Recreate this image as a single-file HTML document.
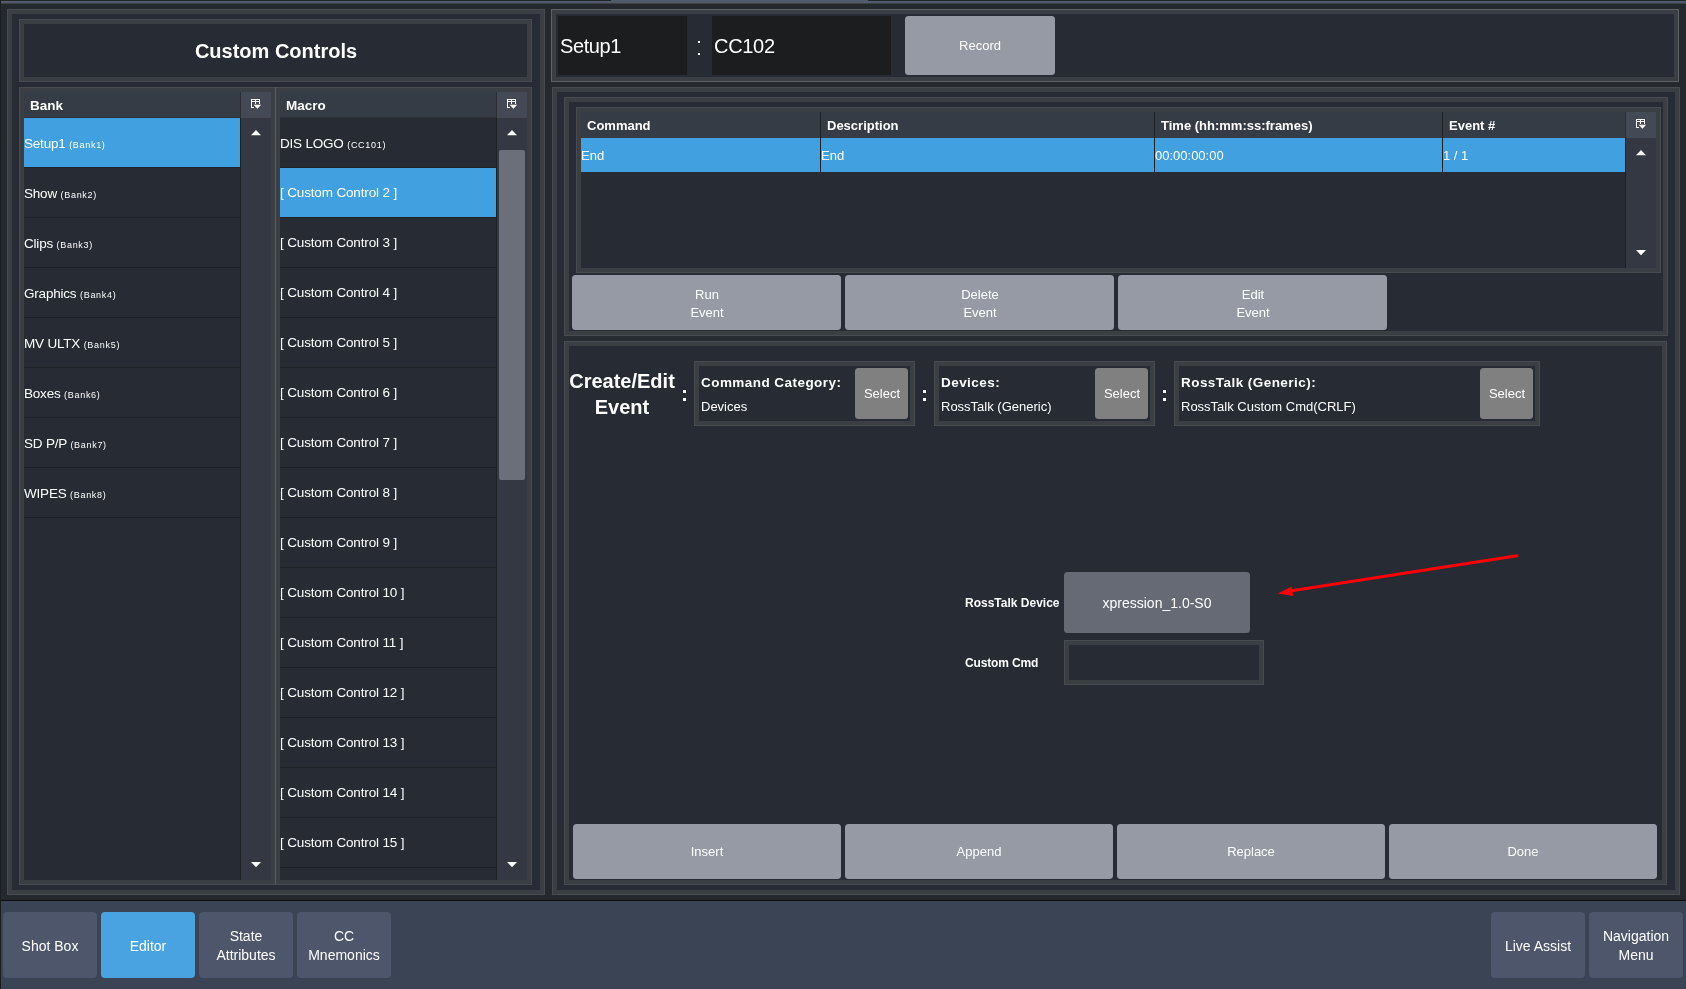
<!DOCTYPE html>
<html><head><meta charset="utf-8"><style>
html,body{margin:0;padding:0;}
body{width:1686px;height:989px;overflow:hidden;position:relative;background:#25282d;font-family:"Liberation Sans",sans-serif;}
body>div,body>svg{position:absolute;box-sizing:border-box;}
.t{white-space:nowrap;will-change:transform;}
</style></head><body>
<div style="left:0px;top:0px;width:1686px;height:1px;background:#23272b;"></div>
<div style="left:611px;top:0px;width:257px;height:1px;background:#4f5a6b;"></div>
<div style="left:0px;top:1px;width:1686px;height:2px;background:#515b6c;"></div>
<div style="left:0px;top:3px;width:1686px;height:1px;background:#3f4042;"></div>
<div style="left:0px;top:0px;width:1px;height:989px;background:#1b1e20;"></div>
<div style="left:7px;top:9px;width:538px;height:886px;background:#272b33;border:1px solid #484b50;box-shadow:inset 0 0 0 4px #3b3e43"></div>
<div style="left:19px;top:19px;width:513px;height:63px;background:#272b33;border:1px solid #484b50;box-shadow:inset 0 0 0 4px #3b3e43"></div>
<div class="t" style="left:-24.5px;width:600px;text-align:center;top:41.00px;font-size:20px;line-height:20px;font-weight:bold;color:#ffffff;">Custom Controls</div>
<div style="left:19px;top:87px;width:513px;height:798px;background:#272b33;border:1px solid #484b50;box-shadow:inset 0 0 0 4px #3b3e43"></div>
<div style="left:271px;top:88px;width:9px;height:796px;background:#3b3e43;"></div>
<div style="left:275px;top:87px;width:1px;height:797px;background:#595c60;"></div>
<div style="left:24px;top:92px;width:217px;height:26px;background:#363c46;"></div>
<div class="t" style="left:30px;top:99.00px;font-size:13.5px;line-height:13.5px;font-weight:bold;color:#ffffff;">Bank</div>
<div style="left:241px;top:92px;width:30px;height:26px;background:#434955;"></div>
<svg style="left:250px;top:98px" width="13" height="13"><rect x="1" y="1" width="9" height="1" fill="#fff"/><rect x="1" y="3" width="9" height="1" fill="#fff"/><rect x="1" y="1" width="1" height="9" fill="#fff"/><rect x="5" y="1" width="1" height="5" fill="#fff"/><rect x="9" y="1" width="1" height="5" fill="#fff"/><rect x="1" y="9" width="3" height="1" fill="#fff"/><polygon points="3.6,6.8 11.2,6.8 7.4,10.8" fill="#fff"/></svg>
<div style="left:241px;top:118px;width:30px;height:762px;background:#343843;"></div>
<div style="left:240px;top:118px;width:1px;height:762px;background:#1d2024;"></div>
<div style="left:240px;top:92px;width:1px;height:26px;background:#2b2e35;"></div>
<div style="left:24px;top:117px;width:216px;height:1px;background:#2c3038;"></div>
<svg style="left:251px;top:130px" width="10" height="6.2"><polygon points="0,5.2 10,5.2 5.0,0" fill="#ffffff"/></svg>
<svg style="left:251px;top:861.5px" width="10" height="6.2"><polygon points="0,0 10,0 5.0,5.2" fill="#ffffff"/></svg>
<div style="left:24px;top:118px;width:216px;height:49px;background:#41a0df;"></div>
<div style="left:24px;top:167px;width:217px;height:1px;background:#1d2024;"></div>
<div class="t" style="left:24px;top:137.00px;font-size:13.5px;line-height:13.5px;color:#ffffff;letter-spacing:-0.2px">Setup1 <span style="font-size:9px;letter-spacing:0.7px">(Bank1)</span></div>
<div style="left:24px;top:168px;width:216px;height:49px;background:#272b33;"></div>
<div style="left:24px;top:217px;width:217px;height:1px;background:#1d2024;"></div>
<div class="t" style="left:24px;top:187.00px;font-size:13.5px;line-height:13.5px;color:#ffffff;letter-spacing:-0.2px">Show <span style="font-size:9px;letter-spacing:0.7px">(Bank2)</span></div>
<div style="left:24px;top:218px;width:216px;height:49px;background:#272b33;"></div>
<div style="left:24px;top:267px;width:217px;height:1px;background:#1d2024;"></div>
<div class="t" style="left:24px;top:237.00px;font-size:13.5px;line-height:13.5px;color:#ffffff;letter-spacing:-0.2px">Clips <span style="font-size:9px;letter-spacing:0.7px">(Bank3)</span></div>
<div style="left:24px;top:268px;width:216px;height:49px;background:#272b33;"></div>
<div style="left:24px;top:317px;width:217px;height:1px;background:#1d2024;"></div>
<div class="t" style="left:24px;top:287.00px;font-size:13.5px;line-height:13.5px;color:#ffffff;letter-spacing:-0.2px">Graphics <span style="font-size:9px;letter-spacing:0.7px">(Bank4)</span></div>
<div style="left:24px;top:318px;width:216px;height:49px;background:#272b33;"></div>
<div style="left:24px;top:367px;width:217px;height:1px;background:#1d2024;"></div>
<div class="t" style="left:24px;top:337.00px;font-size:13.5px;line-height:13.5px;color:#ffffff;letter-spacing:-0.2px">MV ULTX <span style="font-size:9px;letter-spacing:0.7px">(Bank5)</span></div>
<div style="left:24px;top:368px;width:216px;height:49px;background:#272b33;"></div>
<div style="left:24px;top:417px;width:217px;height:1px;background:#1d2024;"></div>
<div class="t" style="left:24px;top:387.00px;font-size:13.5px;line-height:13.5px;color:#ffffff;letter-spacing:-0.2px">Boxes <span style="font-size:9px;letter-spacing:0.7px">(Bank6)</span></div>
<div style="left:24px;top:418px;width:216px;height:49px;background:#272b33;"></div>
<div style="left:24px;top:467px;width:217px;height:1px;background:#1d2024;"></div>
<div class="t" style="left:24px;top:437.00px;font-size:13.5px;line-height:13.5px;color:#ffffff;letter-spacing:-0.2px">SD P/P <span style="font-size:9px;letter-spacing:0.7px">(Bank7)</span></div>
<div style="left:24px;top:468px;width:216px;height:49px;background:#272b33;"></div>
<div style="left:24px;top:517px;width:217px;height:1px;background:#1d2024;"></div>
<div class="t" style="left:24px;top:487.00px;font-size:13.5px;line-height:13.5px;color:#ffffff;letter-spacing:-0.2px">WIPES <span style="font-size:9px;letter-spacing:0.7px">(Bank8)</span></div>
<div style="left:280px;top:92px;width:217px;height:26px;background:#363c46;"></div>
<div class="t" style="left:286px;top:99.00px;font-size:13.5px;line-height:13.5px;font-weight:bold;color:#ffffff;">Macro</div>
<div style="left:497px;top:92px;width:30px;height:26px;background:#434955;"></div>
<svg style="left:506px;top:98px" width="13" height="13"><rect x="1" y="1" width="9" height="1" fill="#fff"/><rect x="1" y="3" width="9" height="1" fill="#fff"/><rect x="1" y="1" width="1" height="9" fill="#fff"/><rect x="5" y="1" width="1" height="5" fill="#fff"/><rect x="9" y="1" width="1" height="5" fill="#fff"/><rect x="1" y="9" width="3" height="1" fill="#fff"/><polygon points="3.6,6.8 11.2,6.8 7.4,10.8" fill="#fff"/></svg>
<div style="left:497px;top:118px;width:30px;height:762px;background:#343843;"></div>
<div style="left:496px;top:118px;width:1px;height:762px;background:#1d2024;"></div>
<div style="left:496px;top:92px;width:1px;height:26px;background:#2b2e35;"></div>
<div style="left:280px;top:117px;width:216px;height:1px;background:#2c3038;"></div>
<div style="left:499px;top:150px;width:26px;height:330px;background:#6b6f7a;border-radius:2px"></div>
<svg style="left:507px;top:130px" width="10" height="6.2"><polygon points="0,5.2 10,5.2 5.0,0" fill="#ffffff"/></svg>
<svg style="left:507px;top:861.5px" width="10" height="6.2"><polygon points="0,0 10,0 5.0,5.2" fill="#ffffff"/></svg>
<div style="left:280px;top:118px;width:216px;height:49px;background:#272b33;"></div>
<div style="left:280px;top:167px;width:217px;height:1px;background:#1d2024;"></div>
<div class="t" style="left:280px;top:137.00px;font-size:13.5px;line-height:13.5px;color:#ffffff;letter-spacing:-0.2px">DIS LOGO <span style="font-size:9px;letter-spacing:0.7px">(CC101)</span></div>
<div style="left:280px;top:168px;width:216px;height:49px;background:#41a0df;"></div>
<div style="left:280px;top:217px;width:217px;height:1px;background:#1d2024;"></div>
<div class="t" style="left:280px;top:186.00px;font-size:13.5px;line-height:13.5px;color:#ffffff;letter-spacing:-0.15px">[ Custom Control 2 ]</div>
<div style="left:280px;top:218px;width:216px;height:49px;background:#272b33;"></div>
<div style="left:280px;top:267px;width:217px;height:1px;background:#1d2024;"></div>
<div class="t" style="left:280px;top:236.00px;font-size:13.5px;line-height:13.5px;color:#ffffff;letter-spacing:-0.15px">[ Custom Control 3 ]</div>
<div style="left:280px;top:268px;width:216px;height:49px;background:#272b33;"></div>
<div style="left:280px;top:317px;width:217px;height:1px;background:#1d2024;"></div>
<div class="t" style="left:280px;top:286.00px;font-size:13.5px;line-height:13.5px;color:#ffffff;letter-spacing:-0.15px">[ Custom Control 4 ]</div>
<div style="left:280px;top:318px;width:216px;height:49px;background:#272b33;"></div>
<div style="left:280px;top:367px;width:217px;height:1px;background:#1d2024;"></div>
<div class="t" style="left:280px;top:336.00px;font-size:13.5px;line-height:13.5px;color:#ffffff;letter-spacing:-0.15px">[ Custom Control 5 ]</div>
<div style="left:280px;top:368px;width:216px;height:49px;background:#272b33;"></div>
<div style="left:280px;top:417px;width:217px;height:1px;background:#1d2024;"></div>
<div class="t" style="left:280px;top:386.00px;font-size:13.5px;line-height:13.5px;color:#ffffff;letter-spacing:-0.15px">[ Custom Control 6 ]</div>
<div style="left:280px;top:418px;width:216px;height:49px;background:#272b33;"></div>
<div style="left:280px;top:467px;width:217px;height:1px;background:#1d2024;"></div>
<div class="t" style="left:280px;top:436.00px;font-size:13.5px;line-height:13.5px;color:#ffffff;letter-spacing:-0.15px">[ Custom Control 7 ]</div>
<div style="left:280px;top:468px;width:216px;height:49px;background:#272b33;"></div>
<div style="left:280px;top:517px;width:217px;height:1px;background:#1d2024;"></div>
<div class="t" style="left:280px;top:486.00px;font-size:13.5px;line-height:13.5px;color:#ffffff;letter-spacing:-0.15px">[ Custom Control 8 ]</div>
<div style="left:280px;top:518px;width:216px;height:49px;background:#272b33;"></div>
<div style="left:280px;top:567px;width:217px;height:1px;background:#1d2024;"></div>
<div class="t" style="left:280px;top:536.00px;font-size:13.5px;line-height:13.5px;color:#ffffff;letter-spacing:-0.15px">[ Custom Control 9 ]</div>
<div style="left:280px;top:568px;width:216px;height:49px;background:#272b33;"></div>
<div style="left:280px;top:617px;width:217px;height:1px;background:#1d2024;"></div>
<div class="t" style="left:280px;top:586.00px;font-size:13.5px;line-height:13.5px;color:#ffffff;letter-spacing:-0.15px">[ Custom Control 10 ]</div>
<div style="left:280px;top:618px;width:216px;height:49px;background:#272b33;"></div>
<div style="left:280px;top:667px;width:217px;height:1px;background:#1d2024;"></div>
<div class="t" style="left:280px;top:636.00px;font-size:13.5px;line-height:13.5px;color:#ffffff;letter-spacing:-0.15px">[ Custom Control 11 ]</div>
<div style="left:280px;top:668px;width:216px;height:49px;background:#272b33;"></div>
<div style="left:280px;top:717px;width:217px;height:1px;background:#1d2024;"></div>
<div class="t" style="left:280px;top:686.00px;font-size:13.5px;line-height:13.5px;color:#ffffff;letter-spacing:-0.15px">[ Custom Control 12 ]</div>
<div style="left:280px;top:718px;width:216px;height:49px;background:#272b33;"></div>
<div style="left:280px;top:767px;width:217px;height:1px;background:#1d2024;"></div>
<div class="t" style="left:280px;top:736.00px;font-size:13.5px;line-height:13.5px;color:#ffffff;letter-spacing:-0.15px">[ Custom Control 13 ]</div>
<div style="left:280px;top:768px;width:216px;height:49px;background:#272b33;"></div>
<div style="left:280px;top:817px;width:217px;height:1px;background:#1d2024;"></div>
<div class="t" style="left:280px;top:786.00px;font-size:13.5px;line-height:13.5px;color:#ffffff;letter-spacing:-0.15px">[ Custom Control 14 ]</div>
<div style="left:280px;top:818px;width:216px;height:49px;background:#272b33;"></div>
<div style="left:280px;top:867px;width:217px;height:1px;background:#1d2024;"></div>
<div class="t" style="left:280px;top:836.00px;font-size:13.5px;line-height:13.5px;color:#ffffff;letter-spacing:-0.15px">[ Custom Control 15 ]</div>
<div style="left:280px;top:868px;width:216px;height:12px;background:#272b33;"></div>
<div style="left:551px;top:9px;width:1128px;height:73px;background:#272b33;border:1px solid #5f6366;box-shadow:inset 0 0 0 4px #3b3e43"></div>
<div style="left:558px;top:16px;width:129px;height:59px;background:#1c1d1f;"></div>
<div class="t" style="left:560px;top:36.00px;font-size:20px;line-height:20px;color:#ffffff;letter-spacing:-0.4px">Setup1</div>
<div style="left:698px;top:41px;width:2px;height:2px;background:#ffffff;"></div>
<div style="left:698px;top:53px;width:2px;height:2px;background:#ffffff;"></div>
<div style="left:712px;top:16px;width:179px;height:59px;background:#1c1d1f;"></div>
<div class="t" style="left:714px;top:36.00px;font-size:20px;line-height:20px;color:#ffffff;letter-spacing:-0.3px">CC102</div>
<div style="left:905px;top:16px;width:150px;height:59px;background:#959aa4;border-radius:3.5px"></div>
<div class="t" style="left:680.0px;width:600px;text-align:center;top:39.15px;font-size:13px;line-height:13px;color:#ffffff;">Record</div>
<div style="left:552px;top:87px;width:1128px;height:808px;background:#272b33;border:1px solid #484b50;box-shadow:inset 0 0 0 4px #3b3e43"></div>
<div style="left:564px;top:97px;width:1104px;height:239px;background:#272b33;border:1px solid #484b50;box-shadow:inset 0 0 0 4px #3b3e43"></div>
<div style="left:576px;top:107px;width:1085px;height:166px;background:#272b33;border:1px solid #484b50;box-shadow:inset 0 0 0 4px #3b3e43"></div>
<div style="left:581px;top:112px;width:1044px;height:26px;background:#363c46;"></div>
<div style="left:1626px;top:112px;width:30px;height:26px;background:#434955;"></div>
<div style="left:1625px;top:138px;width:1px;height:130px;background:#1d2024;"></div>
<div style="left:1625px;top:112px;width:1px;height:26px;background:#2b2e35;"></div>
<svg style="left:1635px;top:118px" width="13" height="13"><rect x="1" y="1" width="9" height="1" fill="#fff"/><rect x="1" y="3" width="9" height="1" fill="#fff"/><rect x="1" y="1" width="1" height="9" fill="#fff"/><rect x="5" y="1" width="1" height="5" fill="#fff"/><rect x="9" y="1" width="1" height="5" fill="#fff"/><rect x="1" y="9" width="3" height="1" fill="#fff"/><polygon points="3.6,6.8 11.2,6.8 7.4,10.8" fill="#fff"/></svg>
<div style="left:581px;top:138px;width:1044px;height:34px;background:#41a0df;"></div>
<div style="left:1626px;top:138px;width:30px;height:130px;background:#343843;"></div>
<svg style="left:1636px;top:150px" width="10" height="6.2"><polygon points="0,5.2 10,5.2 5.0,0" fill="#ffffff"/></svg>
<svg style="left:1636px;top:249.5px" width="10" height="6.2"><polygon points="0,0 10,0 5.0,5.2" fill="#ffffff"/></svg>
<div style="left:820px;top:112px;width:1px;height:60px;background:#1d2024;"></div>
<div style="left:1154px;top:112px;width:1px;height:60px;background:#1d2024;"></div>
<div style="left:1442px;top:112px;width:1px;height:60px;background:#1d2024;"></div>
<div class="t" style="left:587px;top:119.00px;font-size:13px;line-height:13px;font-weight:bold;color:#ffffff;">Command</div>
<div class="t" style="left:827px;top:119.00px;font-size:13px;line-height:13px;font-weight:bold;color:#ffffff;">Description</div>
<div class="t" style="left:1161px;top:119.00px;font-size:13px;line-height:13px;font-weight:bold;color:#ffffff;">Time (hh:mm:ss:frames)</div>
<div class="t" style="left:1449px;top:119.00px;font-size:13px;line-height:13px;font-weight:bold;color:#ffffff;">Event #</div>
<div class="t" style="left:581px;top:149.00px;font-size:13px;line-height:13px;color:#ffffff;">End</div>
<div class="t" style="left:821px;top:149.00px;font-size:13px;line-height:13px;color:#ffffff;">End</div>
<div class="t" style="left:1155px;top:149.00px;font-size:13px;line-height:13px;color:#ffffff;">00:00:00:00</div>
<div class="t" style="left:1443px;top:149.00px;font-size:13px;line-height:13px;color:#ffffff;">1 / 1</div>
<div style="left:572px;top:275px;width:269px;height:55px;background:#959aa4;border-radius:3.5px"></div>
<div class="t" style="left:406.5px;width:600px;text-align:center;top:288.00px;font-size:13px;line-height:13px;color:#ffffff;">Run</div>
<div class="t" style="left:406.5px;width:600px;text-align:center;top:306.00px;font-size:13px;line-height:13px;color:#ffffff;">Event</div>
<div style="left:845px;top:275px;width:269px;height:55px;background:#959aa4;border-radius:3.5px"></div>
<div class="t" style="left:679.5px;width:600px;text-align:center;top:288.00px;font-size:13px;line-height:13px;color:#ffffff;">Delete</div>
<div class="t" style="left:679.5px;width:600px;text-align:center;top:306.00px;font-size:13px;line-height:13px;color:#ffffff;">Event</div>
<div style="left:1118px;top:275px;width:269px;height:55px;background:#959aa4;border-radius:3.5px"></div>
<div class="t" style="left:952.5px;width:600px;text-align:center;top:288.00px;font-size:13px;line-height:13px;color:#ffffff;">Edit</div>
<div class="t" style="left:952.5px;width:600px;text-align:center;top:306.00px;font-size:13px;line-height:13px;color:#ffffff;">Event</div>
<div style="left:564px;top:341px;width:1103px;height:544px;background:#272b33;border:1px solid #484b50;box-shadow:inset 0 0 0 4px #3b3e43"></div>
<div class="t" style="left:322px;width:600px;text-align:center;top:371.00px;font-size:20px;line-height:20px;font-weight:bold;color:#ffffff;">Create/Edit</div>
<div class="t" style="left:322px;width:600px;text-align:center;top:396.50px;font-size:20px;line-height:20px;font-weight:bold;color:#ffffff;">Event</div>
<div style="left:683px;top:390px;width:3px;height:3px;background:#ffffff;"></div>
<div style="left:683px;top:398px;width:3px;height:3px;background:#ffffff;"></div>
<div style="left:694px;top:361px;width:221px;height:65px;background:#272b33;border:1px solid #484b50;box-shadow:inset 0 0 0 4px #3b3e43"></div>
<div class="t" style="left:701px;top:376.00px;font-size:13.5px;line-height:13.5px;font-weight:bold;color:#ffffff;letter-spacing:0.45px">Command Category:</div>
<div class="t" style="left:701px;top:400.00px;font-size:13px;line-height:13px;color:#ffffff;">Devices</div>
<div style="left:855px;top:368px;width:53px;height:51px;background:#808080;border-radius:3.5px"></div>
<div class="t" style="left:581.5px;width:600px;text-align:center;top:387.15px;font-size:13px;line-height:13px;color:#ffffff;">Select</div>
<div style="left:923px;top:390px;width:3px;height:3px;background:#ffffff;"></div>
<div style="left:923px;top:398px;width:3px;height:3px;background:#ffffff;"></div>
<div style="left:934px;top:361px;width:221px;height:65px;background:#272b33;border:1px solid #484b50;box-shadow:inset 0 0 0 4px #3b3e43"></div>
<div class="t" style="left:941px;top:376.00px;font-size:13.5px;line-height:13.5px;font-weight:bold;color:#ffffff;letter-spacing:0.45px">Devices:</div>
<div class="t" style="left:941px;top:400.00px;font-size:13px;line-height:13px;color:#ffffff;">RossTalk (Generic)</div>
<div style="left:1095px;top:368px;width:53px;height:51px;background:#808080;border-radius:3.5px"></div>
<div class="t" style="left:821.5px;width:600px;text-align:center;top:387.15px;font-size:13px;line-height:13px;color:#ffffff;">Select</div>
<div style="left:1163px;top:390px;width:3px;height:3px;background:#ffffff;"></div>
<div style="left:1163px;top:398px;width:3px;height:3px;background:#ffffff;"></div>
<div style="left:1174px;top:361px;width:366px;height:65px;background:#272b33;border:1px solid #484b50;box-shadow:inset 0 0 0 4px #3b3e43"></div>
<div class="t" style="left:1181px;top:376.00px;font-size:13.5px;line-height:13.5px;font-weight:bold;color:#ffffff;letter-spacing:0.45px">RossTalk (Generic):</div>
<div class="t" style="left:1181px;top:400.00px;font-size:13px;line-height:13px;color:#ffffff;">RossTalk Custom Cmd(CRLF)</div>
<div style="left:1480px;top:368px;width:53px;height:51px;background:#808080;border-radius:3.5px"></div>
<div class="t" style="left:1206.5px;width:600px;text-align:center;top:387.15px;font-size:13px;line-height:13px;color:#ffffff;">Select</div>
<div class="t" style="left:965px;top:597.00px;font-size:12px;line-height:12px;font-weight:bold;color:#ffffff;">RossTalk Device</div>
<div style="left:1064px;top:572px;width:186px;height:61px;background:#656a75;border-radius:3.5px"></div>
<div class="t" style="left:857.0px;width:600px;text-align:center;top:596.00px;font-size:14px;line-height:14px;color:#ffffff;">xpression_1.0-S0</div>
<div class="t" style="left:965px;top:657.00px;font-size:12px;line-height:12px;font-weight:bold;color:#ffffff;letter-spacing:-0.15px">Custom Cmd</div>
<div style="left:1064px;top:640px;width:200px;height:45px;background:#272b33;border:1px solid #484b50;box-shadow:inset 0 0 0 4px #3b3e43"></div>
<svg style="left:0;top:0" width="1686" height="989"><line x1="1517" y1="555.7" x2="1290" y2="591" stroke="#ff0000" stroke-width="3" stroke-linecap="round"/><polygon points="1277.8,593.5 1291.6,586.6 1293.2,596" fill="#ff0000"/></svg>
<div style="left:573px;top:824px;width:268px;height:55px;background:#959aa4;border-radius:3.5px"></div>
<div class="t" style="left:407.0px;width:600px;text-align:center;top:845.15px;font-size:13px;line-height:13px;color:#ffffff;">Insert</div>
<div style="left:845px;top:824px;width:268px;height:55px;background:#959aa4;border-radius:3.5px"></div>
<div class="t" style="left:679.0px;width:600px;text-align:center;top:845.15px;font-size:13px;line-height:13px;color:#ffffff;">Append</div>
<div style="left:1117px;top:824px;width:268px;height:55px;background:#959aa4;border-radius:3.5px"></div>
<div class="t" style="left:951.0px;width:600px;text-align:center;top:845.15px;font-size:13px;line-height:13px;color:#ffffff;">Replace</div>
<div style="left:1389px;top:824px;width:268px;height:55px;background:#959aa4;border-radius:3.5px"></div>
<div class="t" style="left:1223.0px;width:600px;text-align:center;top:845.15px;font-size:13px;line-height:13px;color:#ffffff;">Done</div>
<div style="left:1px;top:900px;width:1685px;height:1px;background:#0b0c0e;"></div>
<div style="left:1px;top:901px;width:1685px;height:88px;background:#3b4454;"></div>
<div style="left:3px;top:912px;width:94px;height:66px;background:#4d566a;border-radius:4px"></div>
<div class="t" style="left:-250.0px;width:600px;text-align:center;top:939.00px;font-size:14px;line-height:14px;color:#ffffff;">Shot Box</div>
<div style="left:101px;top:912px;width:94px;height:66px;background:#48a3e0;border-radius:4px"></div>
<div class="t" style="left:-152.0px;width:600px;text-align:center;top:939.00px;font-size:14px;line-height:14px;color:#ffffff;">Editor</div>
<div style="left:199px;top:912px;width:94px;height:66px;background:#4d566a;border-radius:4px"></div>
<div class="t" style="left:-54.0px;width:600px;text-align:center;top:928.51px;font-size:14px;line-height:14px;color:#ffffff;">State</div>
<div class="t" style="left:-54.0px;width:600px;text-align:center;top:947.51px;font-size:14px;line-height:14px;color:#ffffff;">Attributes</div>
<div style="left:297px;top:912px;width:94px;height:66px;background:#4d566a;border-radius:4px"></div>
<div class="t" style="left:44.0px;width:600px;text-align:center;top:928.51px;font-size:14px;line-height:14px;color:#ffffff;">CC</div>
<div class="t" style="left:44.0px;width:600px;text-align:center;top:947.51px;font-size:14px;line-height:14px;color:#ffffff;">Mnemonics</div>
<div style="left:1491px;top:912px;width:94px;height:66px;background:#4d566a;border-radius:4px"></div>
<div class="t" style="left:1238.0px;width:600px;text-align:center;top:939.00px;font-size:14px;line-height:14px;color:#ffffff;">Live Assist</div>
<div style="left:1589px;top:912px;width:94px;height:66px;background:#4d566a;border-radius:4px"></div>
<div class="t" style="left:1336.0px;width:600px;text-align:center;top:928.51px;font-size:14px;line-height:14px;color:#ffffff;">Navigation</div>
<div class="t" style="left:1336.0px;width:600px;text-align:center;top:947.51px;font-size:14px;line-height:14px;color:#ffffff;">Menu</div>
</body></html>
